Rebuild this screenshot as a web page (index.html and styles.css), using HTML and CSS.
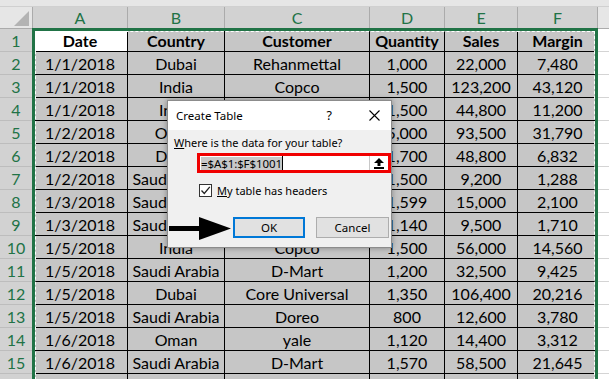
FILE: index.html
```html
<!DOCTYPE html>
<html>
<head>
<meta charset="utf-8">
<link rel="stylesheet" href="styles.css">
</head>
<body>
<div class="app">
  <div class="topstrip"></div>
  <div class="sheet">
    <div class="corner"><svg width="33" height="22" viewBox="0 0 33 22"><polygon points="14,19 29,19 29,4" fill="#b3b3b3"/></svg></div>
    <div class="ch">A</div><div class="ch">B</div><div class="ch">C</div><div class="ch">D</div><div class="ch">E</div><div class="ch">F</div><div class="ch g"></div>

    <div class="rh">1</div><div class="c hd active">Date</div><div class="c hd">Country</div><div class="c hd">Customer</div><div class="c hd">Quantity</div><div class="c hd">Sales</div><div class="c hd">Margin</div><div class="c g"></div>
    <div class="rh">2</div><div class="c">1/1/2018</div><div class="c">Dubai</div><div class="c">Rehanmettal</div><div class="c">1,000</div><div class="c">22,000</div><div class="c">7,480</div><div class="c g"></div>
    <div class="rh">3</div><div class="c">1/1/2018</div><div class="c">India</div><div class="c">Copco</div><div class="c">1,500</div><div class="c">123,200</div><div class="c">43,120</div><div class="c g"></div>
    <div class="rh">4</div><div class="c">1/1/2018</div><div class="c">India</div><div class="c">Copco</div><div class="c">1,500</div><div class="c">44,800</div><div class="c">11,200</div><div class="c g"></div>
    <div class="rh">5</div><div class="c">1/2/2018</div><div class="c">Oman</div><div class="c">Doreo</div><div class="c">5,000</div><div class="c">93,500</div><div class="c">31,790</div><div class="c g"></div>
    <div class="rh">6</div><div class="c">1/2/2018</div><div class="c">Dubai</div><div class="c">Rehanmettal</div><div class="c">1,700</div><div class="c">48,800</div><div class="c">6,832</div><div class="c g"></div>
    <div class="rh">7</div><div class="c">1/2/2018</div><div class="c">Saudi Arabia</div><div class="c">D-Mart</div><div class="c">1,500</div><div class="c">9,200</div><div class="c">1,288</div><div class="c g"></div>
    <div class="rh">8</div><div class="c">1/3/2018</div><div class="c">Saudi Arabia</div><div class="c">Doreo</div><div class="c">1,599</div><div class="c">15,000</div><div class="c">2,100</div><div class="c g"></div>
    <div class="rh">9</div><div class="c">1/3/2018</div><div class="c">Saudi Arabia</div><div class="c">D-Mart</div><div class="c">1,140</div><div class="c">9,500</div><div class="c">1,710</div><div class="c g"></div>
    <div class="rh">10</div><div class="c">1/5/2018</div><div class="c">India</div><div class="c">Copco</div><div class="c">1,500</div><div class="c">56,000</div><div class="c">14,560</div><div class="c g"></div>
    <div class="rh">11</div><div class="c">1/5/2018</div><div class="c">Saudi Arabia</div><div class="c">D-Mart</div><div class="c">1,200</div><div class="c">32,500</div><div class="c">9,425</div><div class="c g"></div>
    <div class="rh">12</div><div class="c">1/5/2018</div><div class="c">Dubai</div><div class="c">Core Universal</div><div class="c">1,350</div><div class="c">106,400</div><div class="c">20,216</div><div class="c g"></div>
    <div class="rh">13</div><div class="c">1/5/2018</div><div class="c">Saudi Arabia</div><div class="c">Doreo</div><div class="c">800</div><div class="c">12,600</div><div class="c">3,780</div><div class="c g"></div>
    <div class="rh">14</div><div class="c">1/6/2018</div><div class="c">Oman</div><div class="c">yale</div><div class="c">1,120</div><div class="c">14,400</div><div class="c">3,312</div><div class="c g"></div>
    <div class="rh">15</div><div class="c">1/6/2018</div><div class="c">Saudi Arabia</div><div class="c">D-Mart</div><div class="c">1,570</div><div class="c">58,500</div><div class="c">21,645</div><div class="c g"></div>
    <div class="rh"></div><div class="c"></div><div class="c"></div><div class="c"></div><div class="c"></div><div class="c"></div><div class="c"></div><div class="c g"></div>
  </div>

  <div class="marquee"></div>

  <div class="dialog">
    <div class="titlebar">
      <span class="title">Create Table</span>
      <span class="help">?</span>
      <svg class="close" width="11" height="11" viewBox="0 0 11 11"><path d="M0.5 0.5 L10.5 10.5 M10.5 0.5 L0.5 10.5" stroke="#000" stroke-width="1.1"/></svg>
    </div>
    <div class="dbody">
      <div class="prompt"><u>W</u>here is the data for your table?</div>
      <div class="range">
        <div class="field"><span class="seltext">=$A$1:$F$1001</span><span class="caret"></span></div>
        <div class="collapse"><svg width="10" height="11" viewBox="0 0 10 11"><polygon points="5,0 10,5 6.5,5 6.5,8 3.5,8 3.5,5 0,5" fill="#000"/><rect x="0" y="9" width="10" height="2" fill="#000"/></svg></div>
      </div>
      <div class="check"><span class="box"><svg width="11" height="11" viewBox="0 0 11 11"><path d="M1.5 5.5 L4.3 8.5 L9.8 1.8" fill="none" stroke="#222" stroke-width="1.3"/></svg></span><span><u>M</u>y table has headers</span></div>
      <div class="buttons">
        <div class="btn ok">OK</div>
        <div class="btn">Cancel</div>
      </div>
    </div>
  </div>

  <svg class="arrow" width="64" height="26" viewBox="0 0 64 26"><rect x="0" y="9" width="32" height="5" fill="#000"/><polygon points="30,0 62,11.5 30,23" fill="#000"/></svg>
</div>
</body>
</html>
```

FILE: styles.css
```css
* { box-sizing: border-box; }
html, body { margin: 0; padding: 0; }
body { width: 609px; height: 379px; overflow: hidden; background: #fff; }

.app {
  position: relative;
  width: 609px;
  height: 379px;
  overflow: hidden;
  font-family: "Lato", "Liberation Sans", sans-serif;
}

.topstrip {
  height: 7px;
  background: #e6e6e6;
  border-bottom: 1px solid #d0d0d0;
}

.sheet {
  display: grid;
  grid-template-columns: 33px 95px 97px 145px 75px 73px 80px 1fr;
  grid-template-rows: 22px;
  grid-auto-rows: 23px;
}

.corner {
  background: #e6e6e6;
  border-right: 1px solid #ababab;
  border-bottom: 1px solid #ababab;
}
.corner svg { display: block; }

.ch {
  background: #d2d2d2;
  color: #217346;
  border-right: 1px solid #ababab;
  border-bottom: 1px solid #ababab;
  font-size: 16px;
  display: flex;
  align-items: center;
  justify-content: center;
}
.ch.g { background: #e6e6e6; border-right: none; }

.rh {
  background: #d2d2d2;
  color: #217346;
  border-right: 1px solid #ababab;
  border-bottom: 1px solid #bdbdbd;
  font-size: 16px;
  display: flex;
  align-items: center;
  justify-content: center;
}

.c {
  background: #c6c6c6;
  color: #000;
  border-right: 1px solid #000;
  border-bottom: 1px solid #000;
  font-size: 16px;
  display: flex;
  align-items: center;
  justify-content: center;
  white-space: nowrap;
  overflow: hidden;
}
.c.hd { font-weight: 700; }
.c.active { background: #fff; }
.c.g { background: #fff; border-right: none; border-bottom: 1px solid #d4d4d4; }

.marquee {
  position: absolute;
  left: 32px;
  top: 28px;
  width: 566px;
  height: 360px;
  border: 3px solid #217346;
}
.marquee::after {
  content: "";
  position: absolute;
  inset: 0px;
  border: 1px dashed #fff;
}

.dialog {
  position: absolute;
  left: 167px;
  top: 100px;
  width: 225px;
  height: 148px;
  background: #f0f0f0;
  border: 1px solid #8c8c8c;
  box-shadow: 0 0 6px rgba(0,0,0,0.35);
  font-family: "Noto Sans", "Open Sans", sans-serif;
  font-size: 11px;
  color: #000;
  display: flex;
  flex-direction: column;
}

.titlebar {
  height: 29px;
  background: #fff;
  display: flex;
  align-items: center;
  padding: 0 11px 0 8px;
}
.title { flex: 1; font-size: 11.5px; }
.help { font-size: 12.5px; margin-right: 37px; }
.close { display: block; }

.dbody {
  padding: 5px 0 0 6px;
  display: flex;
  flex-direction: column;
}
.prompt { font-size: 11px; line-height: 16px; }

.range {
  margin: 2px 0 0 23px;
  width: 194px;
  height: 20px;
  border: 3px solid #f00000;
  background: #fff;
  display: flex;
}
.field {
  flex: 1;
  display: flex;
  align-items: center;
  padding-left: 1px;
}
.seltext {
  background: #c8c8c8;
  font-size: 11.5px;
  line-height: 13px;
  letter-spacing: -0.1px;
}
.caret { width: 1px; height: 14px; background: #000; }
.collapse {
  width: 19px;
  border-left: 1px solid #c8c8c8;
  display: flex;
  align-items: center;
  justify-content: center;
}
.collapse svg { display: block; }

.check {
  margin: 10px 0 0 25px;
  display: flex;
  align-items: center;
  gap: 5px;
  font-size: 11px;
}
.box {
  width: 13px;
  height: 13px;
  border: 1px solid #333;
  background: #fff;
  display: flex;
  align-items: center;
  justify-content: center;
}
.box svg { display: block; }

.buttons {
  margin: 19px 0 0 59px;
  display: flex;
  gap: 11px;
}
.btn {
  width: 73px;
  height: 21px;
  background: #e1e1e1;
  border: 1px solid #adadad;
  display: flex;
  align-items: center;
  justify-content: center;
  font-size: 11.5px;
}
.btn.ok { width: 72px; border: 2px solid #0078d7; }

.arrow {
  position: absolute;
  left: 169px;
  top: 217px;
}
```
